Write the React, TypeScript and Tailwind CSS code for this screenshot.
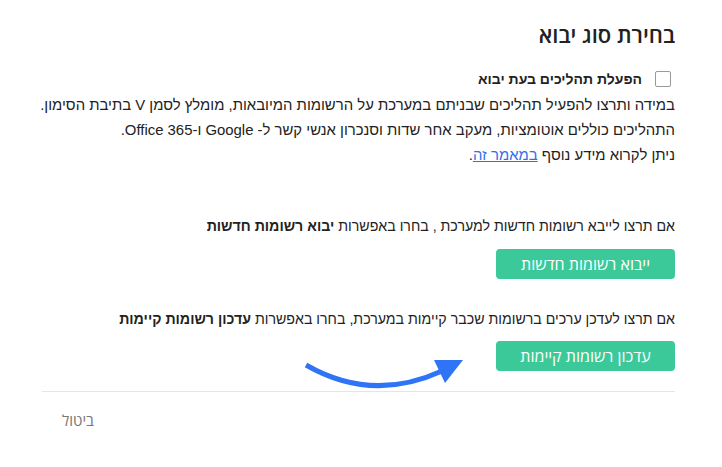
import React from 'react';

const body = { fontFamily: '"Liberation Sans", Arial, sans-serif' };
const heading = { fontFamily: '"Open Sans", "Noto Sans", sans-serif' };

function CurvedArrow() {
  return (
    <svg width="170" height="45" viewBox="0 0 170 45" className="absolute left-[-196px] top-[8px]">
      <path d="M6 16 Q72 54 142 22" fill="none" stroke="#2f74f7" strokeWidth="5" />
      <polygon points="134,11 163,11 145,34" fill="#2f74f7" />
    </svg>
  );
}

export default function App() {
  return (
    <div dir="rtl" className="w-[722px] h-[467px] bg-white text-[#222]" style={body}>
      <div className="pl-[42px] pr-[47px] pt-[19px]">
        <h2 className="text-[22px] font-semibold leading-[30px] text-[#222]" style={heading}>
          בחירת סוג יבוא
        </h2>

        <div className="mt-[20px] h-[20px] flex items-center gap-[13px] pr-[4px]">
          <span className="block w-[16px] h-[16px] border border-[#9a9a9a] rounded-[2px] bg-white" />
          <span className="text-[14px] font-bold">הפעלת תהליכים בעת יבוא</span>
        </div>

        <div className="mt-[4px] text-[14.9px] leading-[25px] whitespace-nowrap">
          <p>במידה ותרצו להפעיל תהליכים שבניתם במערכת על הרשומות המיובאות, מומלץ לסמן V בתיבת הסימון.</p>
          <p>התהליכים כוללים אוטומציות, מעקב אחר שדות וסנכרון אנשי קשר ל- Google ו-Office 365.</p>
          <p>
            ניתן לקרוא מידע נוסף <a href="#" className="text-[#2f6fe8] underline">במאמר זה</a>.
          </p>
        </div>

        <p className="mt-[46px] text-[14.2px] leading-[25px]">
          אם תרצו לייבא רשומות חדשות למערכת , בחרו באפשרות <b>יבוא רשומות חדשות</b>
        </p>
        <button
          className="mt-[10px] w-[179px] h-[30px] rounded-[4px] bg-[#3bc99a] text-white text-[16px]"
          style={heading}
        >
          ייבוא רשומות חדשות
        </button>

        <p className="mt-[28px] text-[14.2px] leading-[25px]">
          אם תרצו לעדכן ערכים ברשומות שכבר קיימות במערכת, בחרו באפשרות <b>עדכון רשומות קיימות</b>
        </p>
        <div className="relative mt-[9px] w-[179px]">
          <button
            className="w-[179px] h-[30px] rounded-[4px] bg-[#3bc99a] text-white text-[16px]"
            style={heading}
          >
            עדכון רשומות קיימות
          </button>
          <CurvedArrow />
        </div>

        <div className="mt-[20px] border-t border-[#e5e5e5]" />
        <div className="mt-[17px] flex justify-end pl-[20px]">
          <button className="text-[15px] text-[#777]" style={heading}>ביטול</button>
        </div>
      </div>
    </div>
  );
}
